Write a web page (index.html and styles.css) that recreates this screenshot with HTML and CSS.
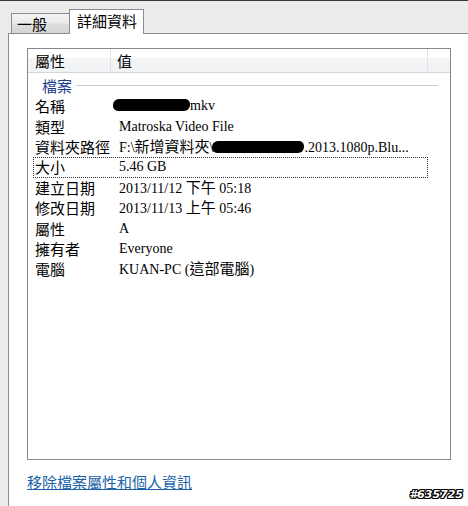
FILE: index.html
```html
<!DOCTYPE html>
<html>
<head>
<meta charset="utf-8">
<link rel="stylesheet" href="styles.css">
</head>
<body>
<div class="window">
  <div class="tabs">
    <div class="tab">一般</div>
    <div class="tab active">詳細資料</div>
  </div>
  <div class="panel">
    <div class="list">
      <div class="header">
        <div class="hcell hname">屬性</div>
        <div class="hcell hval">值</div>
        <div class="hcell hrest"></div>
      </div>
      <div class="group"><span class="gtitle">檔案</span><span class="gline"></span></div>
      <div class="row"><div class="k">名稱</div><div class="v"><span class="blob b1"></span>mkv</div></div>
      <div class="row"><div class="k">類型</div><div class="v">Matroska Video File</div></div>
      <div class="row"><div class="k">資料夾路徑</div><div class="v">F:\<span class="cjk">新增資料夾</span>\<span class="blob b2"></span>.2013.1080p.Blu...</div></div>
      <div class="row sel"><div class="k">大小</div><div class="v">5.46 GB</div></div>
      <div class="row"><div class="k">建立日期</div><div class="v">2013/11/12 <span class="cjk">下午</span> 05:18</div></div>
      <div class="row"><div class="k">修改日期</div><div class="v">2013/11/13 <span class="cjk">上午</span> 05:46</div></div>
      <div class="row"><div class="k">屬性</div><div class="v">A</div></div>
      <div class="row"><div class="k">擁有者</div><div class="v">Everyone</div></div>
      <div class="row"><div class="k">電腦</div><div class="v">KUAN-PC (<span class="cjk">這部電腦</span>)</div></div>
    </div>
    <a class="link" href="#">移除檔案屬性和個人資訊</a>
  </div>
</div>
<div class="mark">#635725</div>
</body>
</html>
```

FILE: styles.css
```css
html, body {
  margin: 0;
  padding: 0;
}
body {
  width: 468px;
  height: 506px;
  overflow: hidden;
  background: #ececec;
  border-top: 1px solid #3a3a3a;
  box-sizing: border-box;
  position: relative;
  font-family: "Noto Sans CJK TC", "Liberation Sans", sans-serif;
}
.window {
  padding-top: 8px;
  height: 100%;
  box-sizing: border-box;
  display: flex;
  flex-direction: column;
}
.tabs {
  display: flex;
  align-items: flex-end;
  padding-left: 11px;
  height: 24px;
  position: relative;
  z-index: 2;
}
.tab {
  height: 20px;
  box-sizing: border-box;
  padding: 0 0 0 5px;
  width: 58px;
  border: 1px solid #898c95;
  border-right: none;
  border-bottom: none;
  background: linear-gradient(#f4f4f4 0%, #ebebeb 45%, #dddddd 55%, #d6d6d6 100%);
  font-size: 15px;
  line-height: 20px;
  color: #000;
}
.tab.active {
  height: 25px;
  width: 75px;
  margin-bottom: -1px;
  padding-left: 7px;
  border-right: 1px solid #898c95;
  background: #ffffff;
  line-height: 21px;
}
.panel {
  flex: 1;
  margin-left: 8px;
  background: #ffffff;
  border-top: 1px solid #898c95;
  border-left: 1px solid #898c95;
  padding: 14px 0 0 18px;
  display: flex;
  flex-direction: column;
}
.list {
  width: 424px;
  height: 412px;
  box-sizing: border-box;
  border: 1px solid #828790;
  background: #fff;
}
.header {
  display: flex;
  height: 24px;
  box-sizing: border-box;
  border-bottom: 1px solid #d5d5d5;
  background: linear-gradient(#ffffff 0%, #ffffff 40%, #f3f4f6 41%, #f1f2f4 100%);
}
.hcell {
  font-size: 15px;
  line-height: 23px;
  box-sizing: border-box;
  border-right: 1px solid #dfe2e6;
}
.hname {
  width: 83px;
  padding-left: 7px;
}
.hval {
  width: 317px;
  padding-left: 6px;
}
.hrest {
  flex: 1;
  border-right: none;
}
.group {
  display: flex;
  align-items: center;
  height: 20px;
  margin-top: 3px;
  padding-left: 14px;
}
.gtitle {
  font-size: 15px;
  color: #1e3c8c;
  line-height: 20px;
}
.gline {
  display: block;
  height: 1px;
  background: #c5ced8;
  width: 362px;
  margin-left: 4px;
  margin-top: -2px;
}
.row {
  display: flex;
  height: 20.4px;
  width: 395px;
  margin-left: 5px;
  box-sizing: border-box;
  border: 1px solid transparent;
  align-items: center;
}
.row.sel {
  border: 1px dotted #333;
}
.k {
  width: 77px;
  padding-left: 1px;
  font-size: 15px;
  line-height: 18px;
  color: #000;
}
.v {
  padding-left: 7px;
  font-family: "Liberation Serif", "Noto Sans CJK TC", serif;
  font-size: 14px;
  line-height: 18px;
  color: #000;
  white-space: nowrap;
}
.cjk {
  font-family: "Noto Sans CJK TC", sans-serif;
  font-size: 15px;
}
.blob {
  display: inline-block;
  background: #000;
  height: 12px;
  vertical-align: -1px;
  border-radius: 6px 5px 6px 5px;
}
.b1 {
  width: 77px;
  margin-left: -6px;
}
.b2 {
  width: 92px;
  margin-left: -1px;
}
.link {
  margin-top: 12px;
  margin-left: 0;
  font-size: 15px;
  color: #1a63a8;
  text-decoration: underline;
  align-self: flex-start;
  line-height: 20px;
}
.mark {
  position: absolute;
  right: 5px;
  bottom: 5px;
  font-family: "DejaVu Sans", sans-serif;
  font-weight: bold;
  font-style: italic;
  font-size: 11px;
  line-height: 12px;
  color: #fff;
  text-shadow: 1px 0 0 #000, -1px 0 0 #000, 0 1px 0 #000, 0 -1px 0 #000, 1px 1px 0 #000, -1px -1px 0 #000, 1px -1px 0 #000, -1px 1px 0 #000;
}
```
